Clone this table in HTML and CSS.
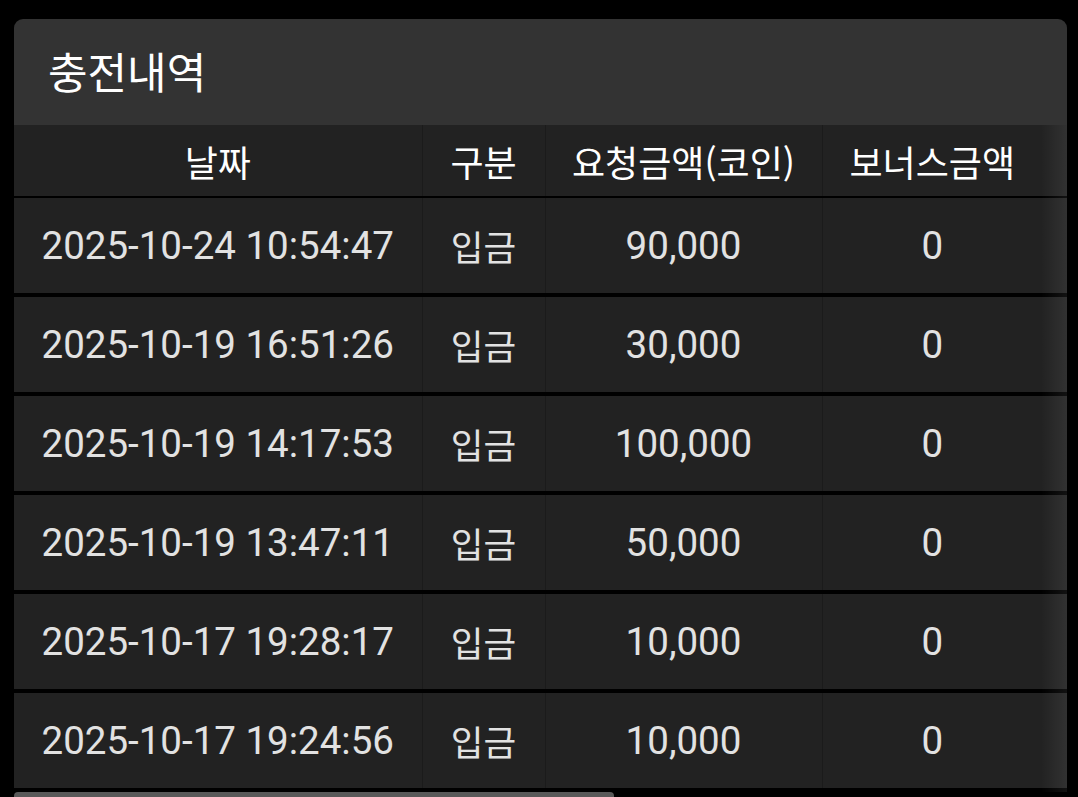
FILE: index.html
```html
<!DOCTYPE html>
<html lang="ko">
<head>
<meta charset="utf-8">
<link rel="stylesheet" href="styles.css">
</head>
<body>
<div class="panel">
  <div class="title">충전내역</div>
  <div class="table-wrap">
    <table class="history">
      <colgroup>
        <col class="c1"><col class="c2"><col class="c3"><col class="c4"><col class="c5">
      </colgroup>
      <thead>
        <tr>
          <th>날짜</th>
          <th>구분</th>
          <th>요청금액(코인)</th>
          <th>보너스금액</th>
          <th class="edge"></th>
        </tr>
      </thead>
      <tbody>
        <tr><td>2025-10-24 10:54:47</td><td>입금</td><td>90,000</td><td>0</td><td class="edge"></td></tr>
        <tr><td>2025-10-19 16:51:26</td><td>입금</td><td>30,000</td><td>0</td><td class="edge"></td></tr>
        <tr><td>2025-10-19 14:17:53</td><td>입금</td><td>100,000</td><td>0</td><td class="edge"></td></tr>
        <tr><td>2025-10-19 13:47:11</td><td>입금</td><td>50,000</td><td>0</td><td class="edge"></td></tr>
        <tr><td>2025-10-17 19:28:17</td><td>입금</td><td>10,000</td><td>0</td><td class="edge"></td></tr>
        <tr><td>2025-10-17 19:24:56</td><td>입금</td><td>10,000</td><td>0</td><td class="edge"></td></tr>
      </tbody>
    </table>
    <div class="fade"></div>
  </div>
  <div class="scrollbar"><div class="thumb"></div></div>
</div>
</body>
</html>
```

FILE: styles.css
```css
html, body {
  margin: 0;
  padding: 0;
  background: #000;
  height: 797px;
  overflow: hidden;
}
body {
  font-family: Roboto, "Noto Sans CJK KR", sans-serif;
  color: #e6e6e6;
}
.panel {
  margin: 19px 0 0 14px;
  width: 1053px;
  background: #333;
  border-radius: 9px 9px 0 0;
  overflow: hidden;
}
.title {
  height: 106px;
  display: flex;
  align-items: center;
  padding-left: 34px;
  padding-bottom: 4px;
  box-sizing: border-box;
  font-family: "Noto Sans CJK KR", sans-serif;
  font-size: 43px;
  color: #fff;
}
.table-wrap {
  position: relative;
  background: #000;
}
.history {
  border-collapse: collapse;
  table-layout: fixed;
  width: 1053px;
}
.c1 { width: 408px; }
.c2 { width: 123px; }
.c3 { width: 277px; }
.c4 { width: 220px; }
.c5 { width: 25px; }
.history th, .history td {
  background: #222;
  text-align: center;
  padding: 0;
  border-left: 1px solid #1b1b1b;
  white-space: nowrap;
}
.history th:first-child, .history td:first-child,
.history .edge {
  border-left: none;
}
.history th {
  height: 71px;
  border-bottom: 2px solid #000;
  font-family: "Noto Sans CJK KR", sans-serif;
  font-weight: normal;
  font-size: 36px;
  color: #fff;
}
.history td {
  height: 95px;
  border-bottom: 4px solid #000;
  font-size: 38.5px;
  color: #e2e2e2;
}
.history td:nth-child(2) {
  font-family: "Noto Sans CJK KR", sans-serif;
  font-size: 35.5px;
}
.fade {
  position: absolute;
  top: 0;
  right: 0;
  bottom: 0;
  width: 26px;
  background: linear-gradient(to right, rgba(255,255,255,0), rgba(255,255,255,0.07));
  pointer-events: none;
}
.scrollbar {
  background: #000;
  height: 8px;
}
.thumb {
  width: 600px;
  height: 8px;
  background: #595959;
  border-radius: 4px;
}
```
